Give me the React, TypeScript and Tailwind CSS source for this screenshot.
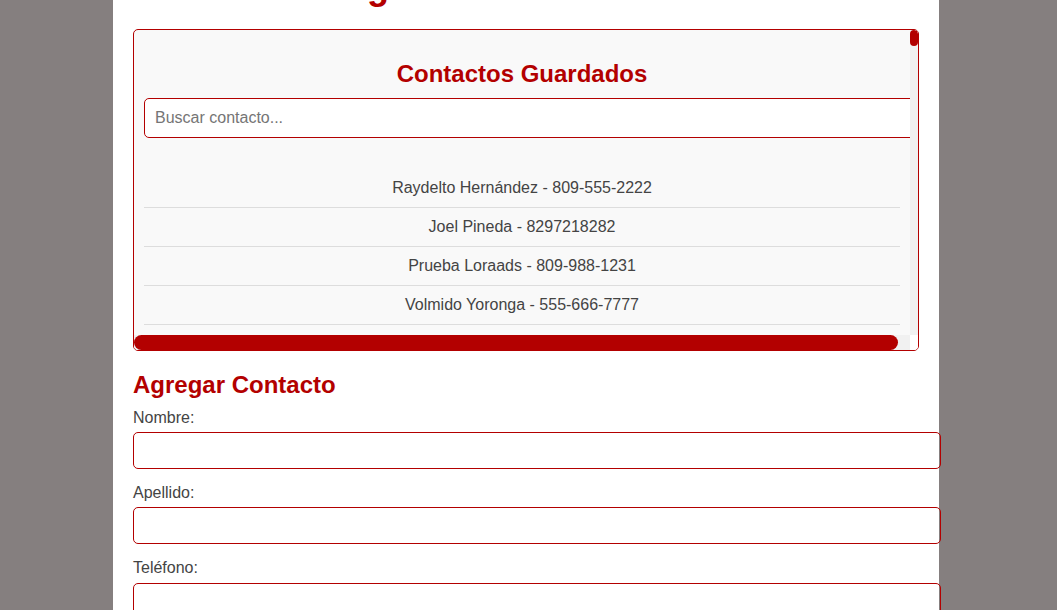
import { useState } from 'react'

const firstContacts = [
	{ nombre: 'Raydelto', apellido: 'Hernández', telefono: '809-555-2222' },
	{ nombre: 'Joel', apellido: 'Pineda', telefono: '8297218282' },
	{ nombre: 'Prueba', apellido: 'Loraads', telefono: '809-988-1231' },
	{ nombre: 'Volmido', apellido: 'Yoronga', telefono: '555-666-7777' },
]

const nombres = ['Carlos', 'María', 'José', 'Ana', 'Luis', 'Carmen', 'Pedro', 'Rosa', 'Miguel', 'Laura', 'Juan', 'Elena']
const apellidos = ['Pérez', 'Gómez', 'Rodríguez', 'Martínez', 'Santos', 'Díaz', 'Reyes', 'Castillo', 'Núñez', 'Peña', 'Batista', 'Almonte']

const moreContacts = Array.from({ length: 20 }, (_, i) => ({
	nombre: nombres[i % nombres.length],
	apellido: apellidos[(i * 5) % apellidos.length],
	telefono: `809-${String(200 + ((i * 37) % 700)).padStart(3, '0')}-${String(1000 + ((i * 913) % 9000))}`,
}))

const contactos = [...firstContacts, ...moreContacts]

export default function App() {
	const [busqueda, setBusqueda] = useState('')
	const [nombre, setNombre] = useState('')
	const [apellido, setApellido] = useState('')
	const [telefono, setTelefono] = useState('')

	const filtrados = contactos.filter((c) =>
		`${c.nombre} ${c.apellido} ${c.telefono}`.toLowerCase().includes(busqueda.toLowerCase()),
	)

	return (
		<div className="min-h-screen bg-[#857f7f] font-['Liberation_Sans',Arial,sans-serif] text-[16px] text-[#444]">
			<div className="ml-[113px] w-[826px] bg-white px-5 pb-10">
				{/* Title (page is scrolled down a bit) */}
				<h1 className="-mt-[34px] mb-[22px] text-center text-[36px] font-bold leading-[41px] text-[#b30000]">
					Agenda de Contactos
				</h1>

				{/* Saved contacts, with the red scrollbars drawn in the grid */}
				<div className="grid h-[322px] grid-cols-[1fr_8px] grid-rows-[1fr_15px] overflow-hidden rounded-[5px] border border-[#b30000] bg-[#f9f9f9]">
					<div className="overflow-hidden p-[10px]">
						<h2 className="mt-[20px] mb-[10px] text-center text-[24px] font-bold leading-[27.6px] text-[#b30000]">
							Contactos Guardados
						</h2>
						<input
							type="text"
							placeholder="Buscar contacto..."
							value={busqueda}
							onChange={(e) => setBusqueda(e.target.value)}
							className="block h-10 w-[778px] max-w-none rounded-[5px] border border-[#b30000] bg-white px-[10px] text-[16px] text-[#444] placeholder:text-[#757575] focus:outline-none"
						/>
						<ul className="mt-[31px]">
							{filtrados.map((c, i) => (
								<li key={i} className="border-b border-[#ddd] py-[10px] text-center leading-[18px]">
									{c.nombre} {c.apellido} - {c.telefono}
								</li>
							))}
						</ul>
					</div>
					<div className="flex flex-col bg-[#f1f1f1]">
						<div className="h-[16px] w-2 rounded-full bg-[#b30000]" />
					</div>
					<div className="flex bg-[#f1f1f1]">
						<div className="h-[15px] w-[764px] rounded-[8px] bg-[#b30000]" />
					</div>
					<div className="bg-white" />
				</div>

				{/* Add contact */}
				<h2 className="mt-[20px] mb-[10px] text-[24px] font-bold leading-[27.6px] text-[#b30000]">
					Agregar Contacto
				</h2>
				<form onSubmit={(e) => e.preventDefault()}>
					<label className="mb-[5px] block leading-[18.4px]">Nombre:</label>
					<input
						type="text"
						value={nombre}
						onChange={(e) => setNombre(e.target.value)}
						className="mb-[15px] block h-[37px] w-[808px] max-w-none rounded-[5px] border border-[#b30000] px-[10px] focus:outline-none"
					/>
					<label className="mb-[5px] block leading-[18.4px]">Apellido:</label>
					<input
						type="text"
						value={apellido}
						onChange={(e) => setApellido(e.target.value)}
						className="mb-[15px] block h-[37px] w-[808px] max-w-none rounded-[5px] border border-[#b30000] px-[10px] focus:outline-none"
					/>
					<label className="mb-[5px] block leading-[18.4px]">Teléfono:</label>
					<input
						type="text"
						value={telefono}
						onChange={(e) => setTelefono(e.target.value)}
						className="mb-[15px] block h-[37px] w-[808px] max-w-none rounded-[5px] border border-[#b30000] px-[10px] focus:outline-none"
					/>
					<button
						type="submit"
						className="rounded-[5px] bg-[#b30000] px-5 py-[10px] font-bold text-white"
					>
						Guardar Contacto
					</button>
				</form>
			</div>
		</div>
	)
}
